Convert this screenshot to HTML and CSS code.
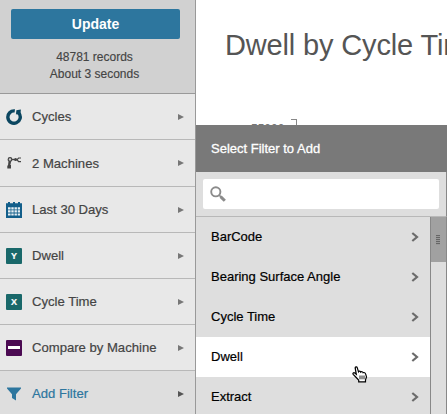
FILE: index.html
```html
<!DOCTYPE html>
<html lang="en">
<head>
<meta charset="utf-8">
<title>Dwell by Cycle Time</title>
<link rel="stylesheet" href="styles.css">
</head>
<body>
<div class="app">
  <aside class="sidebar">
    <div class="summary">
      <button class="update">Update</button>
      <p class="stats">48781 records<br>About 3 seconds</p>
    </div>
    <ul class="filters">
      <li class="filter">
        <svg class="icon" viewBox="0 0 16 16"><path d="M8.800 1.900A6.200 6.200 0 1 0 13 4.300" fill="none" stroke="#0b4660" stroke-width="3.400"/><path d="M9.900 5.200 10.300 1.200l4.600-.7-.5 4.600-2 .3z" fill="#0b4660"/><path d="M9.600 0v5.500" stroke="#e8e8e8" stroke-width=".8"/></svg>
        <span class="label">Cycles</span><i class="arrow"></i>
      </li>
      <li class="filter tall">
        <svg class="icon" viewBox="0 0 16 16"><path d="M4.200 4.500h5.600" stroke="#444" stroke-width="1.400"/><path d="M2.600 5h2.800l-1 5h.6v3.400H1.300V10.500h.7z" fill="#444"/><circle cx="4" cy="4.400" r="1.800" fill="#ccc" stroke="#444" stroke-width="1.200"/><path d="M15 3h-2.400L11 4.700l1.600 1.900H15" fill="none" stroke="#444" stroke-width="1.200"/><circle cx="9.600" cy="4.600" r="1.500" fill="#444"/></svg>
        <span class="label">2 Machines</span><i class="arrow"></i>
      </li>
      <li class="filter">
        <svg class="icon" viewBox="0 0 16 16"><path d="M0 1.300h2V0h2v1.300h3V0h2v1.300h3V0h2v1.300h2V16H0z" fill="#125e8a"/><path d="M2 5.200h2.600v2.200H2zm3.300 0h2.400v2.200H5.300zm3.200 0h2.400v2.200H8.500zm3.200 0h2.300v2.200h-2.300zM2 8.300h2.600v2.200H2zm3.300 0h2.400v2.200H5.300zm3.200 0h2.400v2.200H8.500zm3.200 0h2.300v2.200h-2.300zM2 11.400h2.600v2.200H2zm3.300 0h2.400v2.200H5.300zm3.200 0h2.400v2.200H8.500zm3.200 0h2.300v2.200h-2.300z" fill="#e8f0f4"/></svg>
        <span class="label">Last 30 Days</span><i class="arrow"></i>
      </li>
      <li class="filter">
        <span class="icon badge">Y</span>
        <span class="label">Dwell</span><i class="arrow"></i>
      </li>
      <li class="filter">
        <span class="icon badge">X</span>
        <span class="label">Cycle Time</span><i class="arrow"></i>
      </li>
      <li class="filter">
        <span class="icon badge compare"><i class="bar"></i></span>
        <span class="label">Compare by Machine</span><i class="arrow"></i>
      </li>
      <li class="filter add">
        <svg class="icon" viewBox="0 0 16 16"><path d="M1 1.500h14v1L10 8.200V14.500l-4-2.600V8.200L1 2.500z" fill="#2d769e"/></svg>
        <span class="label">Add Filter</span><i class="arrow"></i>
      </li>
    </ul>
  </aside>
  <main class="content">
    <h1 class="title">Dwell by Cycle Time</h1>
    <div class="axis"><span class="tick">55000</span><i class="corner"></i></div>
    <section class="picker">
      <h2 class="picker-title">Select Filter to Add</h2>
      <div class="search">
        <div class="field">
          <svg class="glass" viewBox="0 0 16 16"><circle cx="5.800" cy="5.800" r="4.600" fill="none" stroke="#8b8b8b" stroke-width="1.900"/><path d="M9.300 9.300l1.600 1.600" stroke="#8b8b8b" stroke-width="1.600"/><path d="M10.600 10.600l4.200 4.200" stroke="#8b8b8b" stroke-width="3"/></svg>
        </div>
      </div>
      <div class="scroller">
        <ul class="options">
          <li class="option"><span class="name">BarCode</span><svg class="chevron" viewBox="0 0 8 10"><path d="M1.300 1 6 5 1.300 9"/></svg></li>
          <li class="option"><span class="name">Bearing Surface Angle</span><svg class="chevron" viewBox="0 0 8 10"><path d="M1.300 1 6 5 1.300 9"/></svg></li>
          <li class="option"><span class="name">Cycle Time</span><svg class="chevron" viewBox="0 0 8 10"><path d="M1.300 1 6 5 1.300 9"/></svg></li>
          <li class="option hover"><span class="name">Dwell</span><svg class="chevron" viewBox="0 0 8 10"><path d="M1.300 1 6 5 1.300 9"/></svg></li>
          <li class="option"><span class="name">Extract</span><svg class="chevron" viewBox="0 0 8 10"><path d="M1.300 1 6 5 1.300 9"/></svg></li>
        </ul>
        <div class="track"><div class="thumb"><i class="grip"></i></div></div>
      </div>
    </section>
  </main>
  <svg class="cursor" viewBox="0 0 16 17"><path d="M5.200 12.500 1.200 8.300C.4 7.100 1.700 6.200 2.800 7l1.500 1.300L3.200 2.200C3 .6 4.900.3 5.300 1.800l1.200 4c.5-.9 1.900-.8 2.200.3.700-.7 2.100-.4 2.400.6.900-.5 2.300.1 2.500 1.200l.9 3-1 3v2H6.700v-1.700z" fill="#fff" stroke="#000" stroke-width="1.200"/><path d="M8 9.500v3.800M10 9.500v3.800M12 9.500v3.800" stroke="#000" stroke-width=".9"/></svg>
</div>
</body>
</html>
```
FILE: styles.css
```css
* { box-sizing: border-box; }
body { margin: 0; font-family: "Liberation Sans", Arial, sans-serif; font-size: 13px; color: #444; background: #fff; }
ul { list-style: none; margin: 0; padding: 0; }
.app { position: relative; display: flex; width: 447px; height: 414px; overflow: hidden; }
.sidebar { flex: 0 0 196px; border-right: 1px solid #999; background: #e8e8e8; }
.summary { height: 94px; padding: 9px 15px 0 11px; background: #d1d1d1; border-bottom: 1px solid #999; }
.update { display: block; width: 169px; height: 30px; padding: 0; border: 0; border-radius: 2px; background: #2d769e; color: #fff; font: bold 14px "Liberation Sans", Arial, sans-serif; }
.stats { margin: 10px 2px 0 0; font-size: 12px; line-height: 17px; text-align: center; -webkit-text-stroke: .15px; }
.filter { display: flex; align-items: center; height: 46px; padding: 0 11px 0 6px; border-bottom: 1px solid #b8b8b8; font-size: 13.1px; -webkit-text-stroke: .2px; }
.filter.tall { height: 47px; }
.filter.add { height: 45px; background: #dedede; color: #2d769e; border: 0; }
.icon { flex: none; width: 16px; height: 16px; margin-right: 10px; }
.label { flex: 1; white-space: nowrap; }
.arrow { border: 3.5px solid transparent; border-left: 6px solid #777; border-right: 0; }
.add .arrow { border-left-color: #555; }
.badge { display: flex; align-items: center; justify-content: center; border-radius: 1px; background: #19686a; color: #fff; font-size: 9px; font-weight: bold; }
.compare { background: #4b0a52; }
.bar { width: 12px; height: 3px; background: #fff; }
.content { flex: 1; min-width: 0; overflow: hidden; }
.title { height: 117px; margin: 0; padding: 28px 0 0 29px; font-size: 29px; font-weight: normal; line-height: 34px; letter-spacing: -.15px; white-space: nowrap; color: #555; }
.axis { display: flex; height: 8px; padding-left: 55px; overflow: hidden; }
.tick { width: 40px; padding-top: 5px; font-size: 12px; line-height: 14px; color: #777; }
.corner { width: 6px; height: 8px; margin-top: 2px; border: solid #888; border-width: 1px 1px 0 0; }
.picker { height: 289px; background: #dedede; color: #111; }
.picker-title { height: 47px; margin: 0; padding-left: 15px; font-size: 13px; font-weight: normal; line-height: 47px; color: #fff; background: #797979; -webkit-text-stroke: .3px; }
.search { height: 45px; padding: 7px 7px 0; border-bottom: 1px solid #b8b8b8; border-right: 1px solid #888; }
.field { height: 30px; padding: 7px; border-radius: 2px; background: #fff; }
.glass { display: block; width: 16px; height: 16px; }
.scroller { display: flex; height: 197px; border-right: 1px solid #888; }
.options { flex: 1; }
.option { display: flex; align-items: center; justify-content: space-between; height: 40px; padding: 0 11px 0 15px; color: #000; -webkit-text-stroke: .2px; }
.name { padding-bottom: 2px; }
.option.hover { background: #fff; }
.chevron { width: 8px; height: 10px; fill: none; stroke: #6b6b6b; stroke-width: 2.2; }
.track { flex: 0 0 16px; border-left: 1px solid #888; }
.thumb { display: flex; align-items: center; justify-content: center; height: 45px; background: #a1a1a1; }
.grip { width: 4px; height: 10px; margin-right: 2px; background: repeating-linear-gradient(#666 0 1px, #999 1px 2px); }
.cursor { position: absolute; left: 352px; top: 366px; width: 16px; height: 17px; }
```
